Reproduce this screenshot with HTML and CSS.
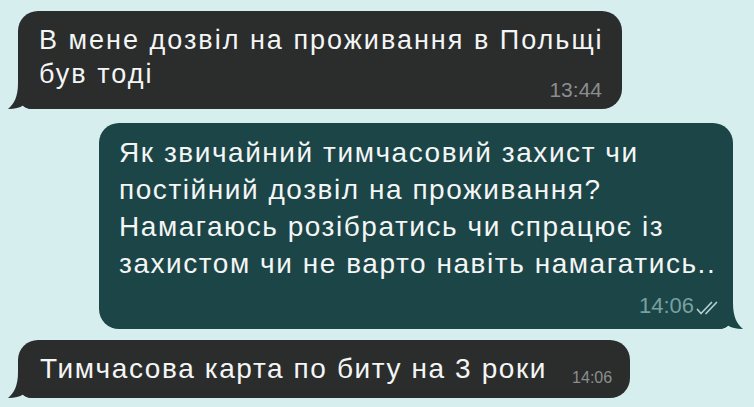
FILE: index.html
```html
<!DOCTYPE html>
<html lang="uk">
<head>
	<meta charset="utf-8" />
	<title>Чат</title>
	<link rel="stylesheet" href="styles.css">
</head>
<body>
<div class="chat">

	<div class="msg msg-in first">
		<svg class="tail" width="24" height="26" viewBox="0 0 24 26"><path d="M10 0 C10 14 6 21 0 26 C7 26 12 24.5 15 22.5 C17 24.5 20 26 24 26 L24 0 Z"/></svg>
		<div class="text">В мене дозвіл на проживання в Польщі<br>був тоді</div>
		<div class="meta"><span class="time">13:44</span></div>
	</div>

	<div class="msg msg-out">
		<svg class="tail" width="24" height="26" viewBox="0 0 24 26"><path d="M10 0 C10 14 6 21 0 26 C7 26 12 24.5 15 22.5 C17 24.5 20 26 24 26 L24 0 Z"/></svg>
		<div class="text">Як звичайний тимчасовий захист чи<br>постійний дозвіл на проживання?<br>Намагаюсь розібратись чи спрацює із<br>захистом чи не варто навіть намагатись..</div>
		<div class="meta">
			<span class="time">14:06</span>
			<svg class="checks" width="22" height="14" viewBox="0 0 22 14"><path d="M1.5 8.5 L5 12.5 L15.5 1.5 M10 12.5 L20.5 1.5"/></svg>
		</div>
	</div>

	<div class="msg msg-in short">
		<svg class="tail" width="24" height="26" viewBox="0 0 24 26"><path d="M10 0 C10 14 6 21 0 26 C7 26 12 24.5 15 22.5 C17 24.5 20 26 24 26 L24 0 Z"/></svg>
		<div class="text">Тимчасова карта по биту на 3 роки</div>
		<span class="time">14:06</span>
	</div>

</div>
</body>
</html>
```

FILE: styles.css
```css
body {
	margin: 0;
	background-color: #d6eeee;
	font-family: "Liberation Sans", Arial, sans-serif;
	overflow: hidden;
}
.chat {
	display: flex;
	flex-direction: column;
	align-items: flex-start;
	padding: 11px 21px 0 18px;
}
.msg {
	position: relative;
	box-sizing: border-box;
	color: #f4f5f5;
	border-radius: 20px;
}
.msg .text {
	white-space: nowrap;
	letter-spacing: 1.55px;
}
.msg .tail {
	position: absolute;
	bottom: 0;
	left: -10px;
}
.msg-in {
	background-color: #2b2d2d;
	border-bottom-left-radius: 14px;
}
.msg-in .tail path {
	fill: #2b2d2d;
}
.msg-out {
	align-self: flex-end;
	margin-top: 14px;
	background-color: #1b4547;
	border-bottom-right-radius: 14px;
}
.msg-out .tail {
	left: auto;
	right: -10px;
	transform: scaleX(-1);
}
.msg-out .tail path {
	fill: #1b4547;
}

/* first incoming message, two lines */
.first {
	width: 604px;
	padding: 12px 20px 9px 21px;
	font-size: 27px;
	line-height: 34px;
}
.first .text {
	letter-spacing: 2px;
}
.meta {
	display: flex;
	justify-content: flex-end;
	align-items: center;
	line-height: 20px;
}
.meta .time {
	font-size: 21px;
}
.first .meta {
	margin-top: -11px;
}
.msg-in .time {
	color: #8b8e8e;
}

/* outgoing */
.msg-out {
	width: 634px;
	padding: 11px 15px 13px 20px;
	font-size: 28px;
	line-height: 37px;
}
.msg-out .meta {
	margin-top: 14px;
}
.msg-out .time {
	font-size: 22px;
	color: #79a0a1;
}
.checks {
	margin-left: 2px;
	margin-top: 4px;
}
.checks path {
	fill: none;
	stroke: #b3cfcf;
	stroke-width: 1.7;
	stroke-linecap: round;
	stroke-linejoin: round;
}

/* one-line incoming with the time inline */
.short {
	display: flex;
	align-items: flex-end;
	margin-top: 11px;
	width: 612px;
	padding: 10px 18px 11px 22px;
	font-size: 28px;
	line-height: 37px;
}
.short .text {
	letter-spacing: 1.6px;
}
.short .time {
	margin-left: 25px;
	font-size: 16px;
	line-height: 19px;
}
```
